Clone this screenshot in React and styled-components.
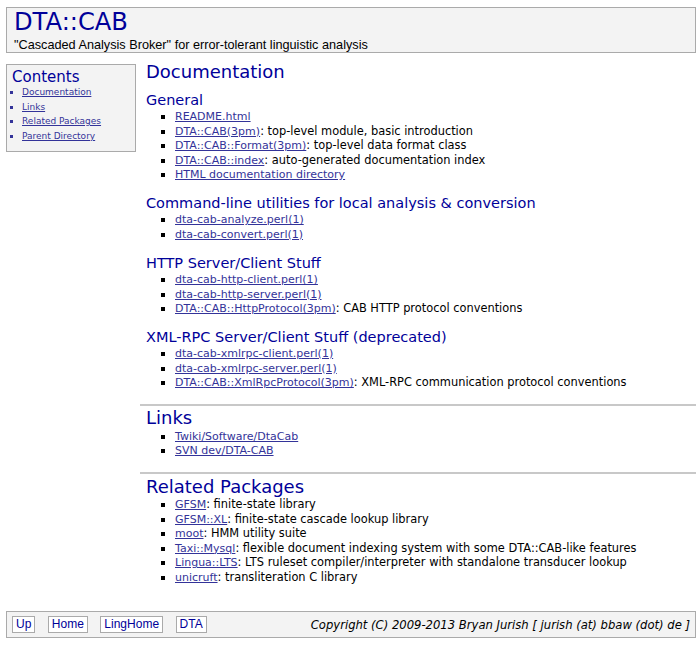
import React from "react";
import styled, { createGlobalStyle } from "styled-components";

const GlobalStyle = createGlobalStyle`
    body {
        margin: 0;
        background: #fff;
        color: #000;
        font-family: "DejaVu Sans", Verdana, sans-serif;
    }
`;

const Page = styled.div`
    padding: 7px 4px 8px 6px;
`;

const Box = styled.div`
    background: #f3f3f3;
    border: 1px solid #aaa;
`;

const Header = styled(Box)`
    height: 44px;
    padding: 0 7px;
`;

const Title = styled.h1`
    margin: 0;
    font-size: 24.2px;
    line-height: 29px;
    font-weight: normal;
    color: #000099;
`;

const Subtitle = styled.div`
    font-family: "Liberation Sans", Arial, sans-serif;
    font-size: 12.7px;
    line-height: 16px;
`;

const Body = styled.div`
    display: flex;
    align-items: flex-start;
    margin-top: 11px;
`;

const Nav = styled(Box)`
    width: 123px;
    flex-shrink: 0;
    height: 78px;
    padding: 3px 0 5px 5px;
`;

const NavTitle = styled.h2`
    margin: 0;
    font-size: 15px;
    line-height: 19px;
    font-weight: normal;
    color: #000099;
`;

const NavList = styled.ul`
    margin: -2px 0 0;
    padding-left: 10px;
    list-style: square;
    font-size: 9px;
    line-height: 14.6px;
    color: #333399;
`;

const Link = styled.a`
    color: #333399;
    text-decoration: underline;
`;

const Main = styled.div`
    flex: 1;
    margin-left: 4px;
    margin-top: -3px;
`;

const Section = styled.section`
    padding: 0 6px;
`;

const H1 = styled.h1`
    margin: ${(p) => p.$top || 0}px 0 0;
    font-size: 18px;
    line-height: 22px;
    font-weight: normal;
    color: #000099;
`;

const H2 = styled.h2`
    margin: ${(p) => p.$top}px 0 0;
    font-size: 14.5px;
    line-height: 18px;
    font-weight: normal;
    color: #000099;
`;

const List = styled.ul`
    margin: ${(p) => p.$top || 0}px 0 0;
    padding-left: 29px;
    list-style: square;
    font-size: 11.4px;
    line-height: 14.6px;

    & li {
        height: 14.6px;
    }

    & a {
        font-size: 11px;
        line-height: 1;
    }
`;

const Rule = styled.hr`
    margin: 14px 0 0;
    border: 0;
    border-top: 2px solid #c8c8c8;
`;

const Footer = styled(Box)`
    display: flex;
    align-items: center;
    justify-content: space-between;
    height: 25px;
    margin-top: 27px;
    padding: 0 5px;
`;

const FootLinks = styled.div`
    display: flex;
    gap: 12.5px;
`;

const FootButton = styled.a`
    display: block;
    background: #fff;
    border: 1px solid #aaa;
    padding: 0 3px;
    font-family: "Liberation Sans", Arial, sans-serif;
    font-size: 12px;
    line-height: 15px;
    color: #000099;
    text-decoration: none;
`;

const Copyright = styled.div`
    font-size: 11.6px;
    font-style: italic;
`;

const Item = ({ href, note }) => (
    <li>
        <Link href="#">{href}</Link>
        {note ? ": " + note : null}
    </li>
);

const groups = [
    {
        title: "General",
        top: 8,
        items: [
            ["README.html"],
            ["DTA::CAB(3pm)", "top-level module, basic introduction"],
            ["DTA::CAB::Format(3pm)", "top-level data format class"],
            ["DTA::CAB::index", "auto-generated documentation index"],
            ["HTML documentation directory"],
        ],
    },
    {
        title: "Command-line utilities for local analysis & conversion",
        top: 12,
        items: [["dta-cab-analyze.perl(1)"], ["dta-cab-convert.perl(1)"]],
    },
    {
        title: "HTTP Server/Client Stuff",
        top: 13,
        items: [
            ["dta-cab-http-client.perl(1)"],
            ["dta-cab-http-server.perl(1)"],
            ["DTA::CAB::HttpProtocol(3pm)", "CAB HTTP protocol conventions"],
        ],
    },
    {
        title: "XML-RPC Server/Client Stuff (deprecated)",
        top: 12,
        items: [
            ["dta-cab-xmlrpc-client.perl(1)"],
            ["dta-cab-xmlrpc-server.perl(1)"],
            ["DTA::CAB::XmlRpcProtocol(3pm)", "XML-RPC communication protocol conventions"],
        ],
    },
];

const related = [
    ["GFSM", "finite-state library"],
    ["GFSM::XL", "finite-state cascade lookup library"],
    ["moot", "HMM utility suite"],
    ["Taxi::Mysql", "flexible document indexing system with some DTA::CAB-like features"],
    ["Lingua::LTS", "LTS ruleset compiler/interpreter with standalone transducer lookup"],
    ["unicruft", "transliteration C library"],
];

const App = () => (
    <Page>
        <GlobalStyle />
        <Header>
            <Title>DTA::CAB</Title>
            <Subtitle>"Cascaded Analysis Broker" for error-tolerant linguistic analysis</Subtitle>
        </Header>
        <Body>
            <Nav>
                <NavTitle>Contents</NavTitle>
                <NavList>
                    <li><Link href="#">Documentation</Link></li>
                    <li><Link href="#">Links</Link></li>
                    <li><Link href="#">Related Packages</Link></li>
                    <li><Link href="#">Parent Directory</Link></li>
                </NavList>
            </Nav>
            <Main>
                <Section>
                    <H1>Documentation</H1>
                    {groups.map((g) => (
                        <div key={g.title}>
                            <H2 $top={g.top}>{g.title}</H2>
                            <List>
                                {g.items.map(([h, n]) => (
                                    <Item key={h} href={h} note={n} />
                                ))}
                            </List>
                        </div>
                    ))}
                </Section>
                <Rule />
                <Section>
                    <H1 $top={1}>Links</H1>
                    <List>
                        <Item href="Twiki/Software/DtaCab" />
                        <Item href="SVN dev/DTA-CAB" />
                    </List>
                </Section>
                <Rule />
                <Section>
                    <H1 $top={2}>Related Packages</H1>
                    <List $top={-1}>
                        {related.map(([h, n]) => (
                            <Item key={h} href={h} note={n} />
                        ))}
                    </List>
                </Section>
            </Main>
        </Body>
        <Footer>
            <FootLinks>
                <FootButton href="#">Up</FootButton>
                <FootButton href="#">Home</FootButton>
                <FootButton href="#">LingHome</FootButton>
                <FootButton href="#">DTA</FootButton>
            </FootLinks>
            <Copyright>Copyright (C) 2009-2013 Bryan Jurish [ jurish (at) bbaw (dot) de ]</Copyright>
        </Footer>
    </Page>
);

export default App;
